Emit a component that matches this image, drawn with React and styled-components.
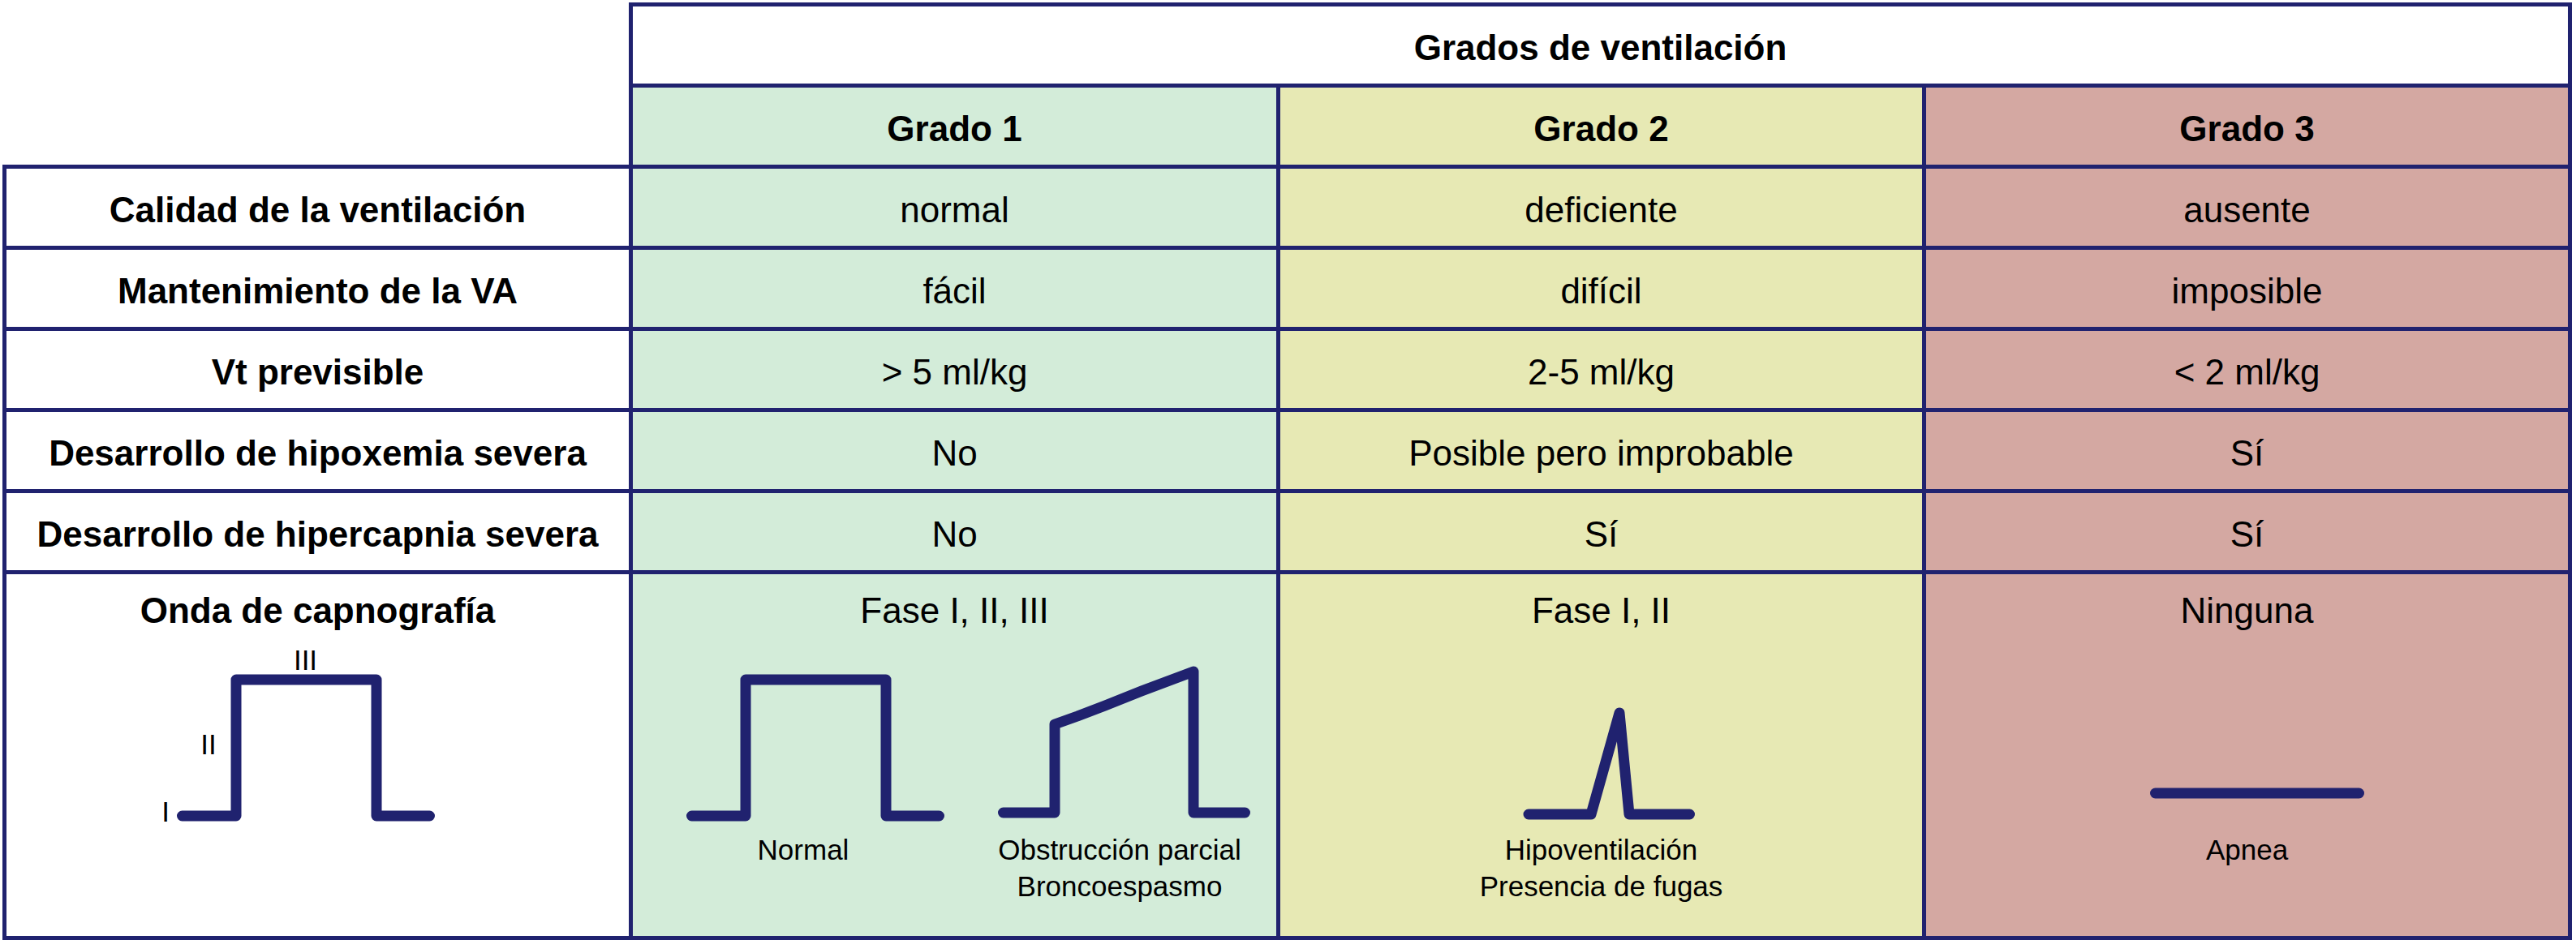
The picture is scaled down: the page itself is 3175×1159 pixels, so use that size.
import React from 'react';
import styled, { createGlobalStyle, css } from 'styled-components';

const NAVY = '#20226f';
const TONES = {
  white: '#ffffff',
  green: '#d3ecd9',
  yellow: '#e7e9b4',
  pink: '#d4a8a2',
};

const GlobalStyle = createGlobalStyle`
  html, body {
    margin: 0;
    background: #ffffff;
  }
  body {
    font-family: "Liberation Sans", Arial, Helvetica, sans-serif;
    color: #000000;
  }
`;

const Page = styled.div`
  padding: 3px 0 0 3px;
`;

const Grid = styled.div`
  display: grid;
  grid-template-columns: 777px 798px 796px 796px;
  grid-template-rows: 105px repeat(6, 100px) 451px;
`;

const Cell = styled.div`
  box-sizing: border-box;
  display: flex;
  align-items: center;
  justify-content: center;
  padding-top: 6px;
  font-size: 44px;
  line-height: 50px;
  white-space: nowrap;
  text-align: center;
  background: ${(p) => TONES[p.$tone || 'white']};
  border-right: 5px solid ${NAVY};
  border-bottom: 5px solid ${NAVY};
  ${(p) => p.$bold && css`font-weight: 700;`}
  ${(p) => p.$left && css`border-left: 5px solid ${NAVY};`}
`;

const Corner = styled.div`
  grid-row: 1 / span 2;
  border-right: 5px solid ${NAVY};
  border-bottom: 5px solid ${NAVY};
`;

const HeaderCell = styled(Cell)`
  grid-column: 2 / span 3;
  border-top: 5px solid ${NAVY};
`;

const WaveCell = styled(Cell)`
  flex-direction: column;
  align-items: stretch;
  justify-content: flex-start;
  padding-top: 20px;
`;

const Title = styled.div`
  text-align: center;
`;

const FigureRow = styled.div`
  display: flex;
  margin-top: 12px;
  font-weight: 400;
`;

const Figure = styled.figure`
  margin: 0;
  display: flex;
  flex-direction: column;
  align-items: center;
  width: ${(p) => (p.$w ? `${p.$w}px` : '100%')};
`;

const Wave = styled.svg`
  display: block;
  overflow: visible;
`;

const Trace = styled.path`
  fill: none;
  stroke: ${NAVY};
  stroke-width: 13;
  stroke-linecap: round;
  stroke-linejoin: round;
`;

const PhaseLabel = styled.text`
  font-family: "Liberation Sans", Arial, Helvetica, sans-serif;
  font-size: 35px;
  font-weight: 400;
  fill: #000000;
  text-anchor: middle;
`;

const Caption = styled.figcaption`
  font-size: 35px;
  line-height: 45px;
  text-align: center;
`;

const FIG_Y = 790;
const FIG_H = 235;

function WaveFigure({ x, w, d, caption, children }) {
  return (
    <Figure $w={w}>
      <Wave width={w} height={FIG_H} viewBox={`${x} ${FIG_Y} ${w} ${FIG_H}`}>
        <Trace d={d} />
        {children}
      </Wave>
      {caption && (
        <Caption>
          {caption.map((line) => (
            <div key={line}>{line}</div>
          ))}
        </Caption>
      )}
    </Figure>
  );
}

const rows = [
  ['Calidad de la ventilación', 'normal', 'deficiente', 'ausente'],
  ['Mantenimiento de la VA', 'fácil', 'difícil', 'imposible'],
  ['Vt previsible', '> 5 ml/kg', '2-5 ml/kg', '< 2 ml/kg'],
  ['Desarrollo de hipoxemia severa', 'No', 'Posible pero improbable', 'Sí'],
  ['Desarrollo de hipercapnia severa', 'No', 'Sí', 'Sí'],
];

const tones = ['green', 'yellow', 'pink'];

export default function App() {
  return (
    <Page>
      <GlobalStyle />
      <Grid>
        <Corner />
        <HeaderCell $bold>Grados de ventilación</HeaderCell>
        {tones.map((tone, i) => (
          <Cell key={tone} $tone={tone} $bold>
            Grado {i + 1}
          </Cell>
        ))}

        {rows.map(([label, ...values]) => (
          <React.Fragment key={label}>
            <Cell $left $bold>{label}</Cell>
            {values.map((v, i) => (
              <Cell key={tones[i]} $tone={tones[i]}>{v}</Cell>
            ))}
          </React.Fragment>
        ))}

        <WaveCell $left $bold>
          <Title>Onda de capnografía</Title>
          <FigureRow>
            <WaveFigure x={8} w={767} d="M224.5 1006 H291 V838 H464 V1006 H529.5">
              <PhaseLabel x={204} y={1013}>I</PhaseLabel>
              <PhaseLabel x={257} y={930}>II</PhaseLabel>
              <PhaseLabel x={376.5} y={826}>III</PhaseLabel>
            </WaveFigure>
          </FigureRow>
        </WaveCell>

        <WaveCell $tone="green">
          <Title>Fase I, II, III</Title>
          <FigureRow>
            <WaveFigure
              x={780}
              w={420}
              d="M852.5 1006 H919 V838 H1092 V1006 H1157.5"
              caption={['Normal']}
            />
            <WaveFigure
              x={1200}
              w={360}
              d="M1236.5 1002 H1300 V893 L1328 883 L1362 870 L1407 852 L1471 828 V1002 H1534.5"
              caption={['Obstrucción parcial', 'Broncoespasmo']}
            />
          </FigureRow>
        </WaveCell>

        <WaveCell $tone="yellow">
          <Title>Fase I, II</Title>
          <FigureRow>
            <WaveFigure
              x={1578}
              w={791}
              d="M1884 1004 H1961 L1996 879 L2008 1004 H2082.5"
              caption={['Hipoventilación', 'Presencia de fugas']}
            />
          </FigureRow>
        </WaveCell>

        <WaveCell $tone="pink">
          <Title>Ninguna</Title>
          <FigureRow>
            <WaveFigure x={2374} w={791} d="M2656.5 978 H2907.5" caption={['Apnea']} />
          </FigureRow>
        </WaveCell>
      </Grid>
    </Page>
  );
}
